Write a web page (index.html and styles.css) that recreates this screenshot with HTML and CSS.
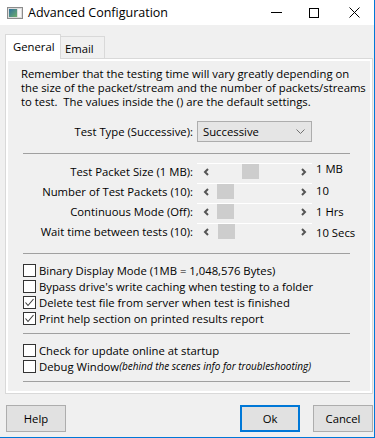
FILE: index.html
```html
<!DOCTYPE html>
<html lang="en">
<head>
    <meta charset="UTF-8">
    <meta name="viewport" content="width=device-width, initial-scale=1.0">
    <title>Advanced Configuration</title>
    <link rel="stylesheet" href="styles.css">
</head>
<body>
<div class="window">
    <div class="titlebar">
        <svg class="app-icon" width="16" height="12" viewBox="0 0 16 12">
            <defs>
                <linearGradient id="ig" x1="0" y1="0" x2="1" y2="1">
                    <stop offset="0" stop-color="#2f6f9e"/>
                    <stop offset="1" stop-color="#6fae6a"/>
                </linearGradient>
            </defs>
            <rect x="0.5" y="0.5" width="15" height="11" fill="#dcdcdc" stroke="#8c8c8c"/>
            <rect x="2" y="2" width="8" height="8" fill="url(#ig)"/>
            <rect x="11" y="2" width="3" height="8" fill="#f8f8f8"/>
        </svg>
        <span class="title">Advanced Configuration</span>
        <div class="controls">
            <span class="ctl ctl-min"><svg width="11" height="1"><rect width="11" height="1" fill="#000"/></svg></span>
            <span class="ctl ctl-max"><svg width="10" height="10"><rect x="0.5" y="0.5" width="9" height="9" fill="none" stroke="#000"/></svg></span>
            <span class="ctl ctl-close"><svg width="11" height="11"><path d="M0.5 0.5L10.5 10.5M10.5 0.5L0.5 10.5" stroke="#000" fill="none"/></svg></span>
        </div>
    </div>

    <div class="tabs">
        <div class="tab active">General</div>
        <div class="tab email">Email</div>
    </div>

    <div class="panel">
        <div class="content">
            <p class="note">Remember that the testing time will vary greatly depending on<br>the size of the packet/stream and the number of packets/streams<br>to test.&nbsp; The values inside the () are the default settings.</p>

            <div class="field type-row">
                <label>Test Type (Successive):</label>
                <div class="combo">
                    <span>Successive</span>
                    <svg class="chev" width="9" height="5" viewBox="0 0 9 5"><path d="M0.5 0.5L4.5 4.5L8.5 0.5" stroke="#707070" fill="none"/></svg>
                </div>
            </div>

            <hr class="sep sep-first">

            <div class="sliders">
                <div class="field slider-row">
                    <label>Test Packet Size (1 MB):</label>
                    <div class="scroll">
                        <span class="arrow"><svg width="6" height="8" viewBox="0 0 6 8"><path d="M5 1L2 4L5 7" stroke="#555" stroke-width="2" fill="none"/></svg></span>
                        <span class="track"><span class="thumb" style="margin-left:28px"></span></span>
                        <span class="arrow"><svg width="6" height="8" viewBox="0 0 6 8"><path d="M1 1L4 4L1 7" stroke="#555" stroke-width="2" fill="none"/></svg></span>
                    </div>
                    <span class="value">1 MB</span>
                </div>
                <div class="field slider-row">
                    <label>Number of Test Packets (10):</label>
                    <div class="scroll">
                        <span class="arrow"><svg width="6" height="8" viewBox="0 0 6 8"><path d="M5 1L2 4L5 7" stroke="#555" stroke-width="2" fill="none"/></svg></span>
                        <span class="track"><span class="thumb" style="margin-left:3px"></span></span>
                        <span class="arrow"><svg width="6" height="8" viewBox="0 0 6 8"><path d="M1 1L4 4L1 7" stroke="#555" stroke-width="2" fill="none"/></svg></span>
                    </div>
                    <span class="value">10</span>
                </div>
                <div class="field slider-row">
                    <label>Continuous Mode (Off):</label>
                    <div class="scroll">
                        <span class="arrow"><svg width="6" height="8" viewBox="0 0 6 8"><path d="M5 1L2 4L5 7" stroke="#555" stroke-width="2" fill="none"/></svg></span>
                        <span class="track"><span class="thumb" style="margin-left:3px"></span></span>
                        <span class="arrow"><svg width="6" height="8" viewBox="0 0 6 8"><path d="M1 1L4 4L1 7" stroke="#555" stroke-width="2" fill="none"/></svg></span>
                    </div>
                    <span class="value">1 Hrs</span>
                </div>
                <div class="field slider-row">
                    <label>Wait time between tests (10):</label>
                    <div class="scroll">
                        <span class="arrow"><svg width="6" height="8" viewBox="0 0 6 8"><path d="M5 1L2 4L5 7" stroke="#555" stroke-width="2" fill="none"/></svg></span>
                        <span class="track"><span class="thumb" style="margin-left:4px"></span></span>
                        <span class="arrow"><svg width="6" height="8" viewBox="0 0 6 8"><path d="M1 1L4 4L1 7" stroke="#555" stroke-width="2" fill="none"/></svg></span>
                    </div>
                    <span class="value">10 Secs</span>
                </div>
            </div>

            <hr class="sep">

            <div class="checks">
                <div class="check"><span class="box"></span>Binary Display Mode (1MB = 1,048,576 Bytes)</div>
                <div class="check"><span class="box"></span>Bypass drive's write caching when testing to a folder</div>
                <div class="check"><span class="box"><svg width="11" height="11" viewBox="0 0 11 11"><path d="M1.5 5.5L4 8.5L9.5 2" stroke="#3a3a3a" stroke-width="1.1" fill="none"/></svg></span>Delete test file from server when test is finished</div>
                <div class="check"><span class="box"><svg width="11" height="11" viewBox="0 0 11 11"><path d="M1.5 5.5L4 8.5L9.5 2" stroke="#3a3a3a" stroke-width="1.1" fill="none"/></svg></span>Print help section on printed results report</div>
            </div>

            <hr class="sep sep-mid">

            <div class="checks">
                <div class="check"><span class="box"></span>Check for update online at startup</div>
                <div class="check"><span class="box"></span>Debug Window<em class="hint">(behind the scenes info for troubleshooting)</em></div>
            </div>

            <hr class="sep sep-mid">
        </div>
    </div>

    <div class="buttons">
        <button class="btn">Help</button>
        <button class="btn btn-ok">Ok</button>
        <button class="btn btn-cancel">Cancel</button>
    </div>
</div>
</body>
</html>
```

FILE: styles.css
```css
body {
    margin: 0;
    background-color: #f0f0f0;
    font-family: "Open Sans", "Noto Sans", sans-serif;
    font-size: 11.3px;
    color: #000;
}
.window {
    width: 374px;
    height: 437px;
    border-right: 1px solid #0078d7;
    border-bottom: 1px solid #0078d7;
    overflow: hidden;
}

/* title bar */
.titlebar {
    height: 25px;
    background-color: #fff;
    display: flex;
    align-items: center;
}
.app-icon {
    margin-left: 7px;
    flex: none;
}
.title {
    margin-left: 5px;
    font-size: 12.5px;
    line-height: 25px;
}
.controls {
    margin-left: auto;
    display: flex;
}
.ctl {
    height: 25px;
    display: flex;
    align-items: center;
    justify-content: center;
}
.ctl-min { width: 36px; }
.ctl-max { width: 40px; }
.ctl-close { width: 40px; }

/* tabs */
.tabs {
    margin-top: 9px;
    padding-left: 5px;
    height: 24px;
    display: flex;
    align-items: flex-end;
}
.tab {
    box-sizing: border-box;
    height: 22px;
    padding-top: 5px;
    line-height: 14px;
    border: 1px solid #d9d9d9;
    border-bottom: 0;
    background-color: #f0f0f0;
}
.tab.active {
    position: relative;
    z-index: 1;
    width: 56px;
    height: 25px;
    margin-bottom: -1px;
    padding-left: 7px;
    background-color: #fff;
}
.tab.email {
    width: 45px;
    margin-left: -1px;
    padding-left: 4px;
}

.panel {
    box-sizing: border-box;
    margin-left: 5px;
    width: 368px;
    height: 336px;
    border: 1px solid #d9d9d9;
    background-color: #fff;
    padding: 2px;
}
.content {
    height: 100%;
    background-color: #f0f0f0;
    overflow: hidden;
}
.note {
    margin: 0;
    padding: 6px 0 0 13px;
    line-height: 14px;
    white-space: nowrap;
}

/* label + control rows */
.field {
    display: grid;
    grid-template-columns: 185px 115px auto;
    column-gap: 4px;
    align-items: center;
}
.field label {
    text-align: right;
    white-space: nowrap;
    line-height: 14px;
}
.type-row {
    margin-top: 12px;
}
.combo {
    box-sizing: border-box;
    height: 21px;
    border: 1px solid #adadad;
    background-color: #e5e5e5;
    display: flex;
    align-items: center;
    padding-left: 5px;
}
.combo .chev {
    margin-left: auto;
    margin-right: 6px;
}

.sep {
    margin: 0 0 0 15px;
    width: 327px;
    height: 0;
    border: 0;
    border-top: 1px solid #a0a0a0;
}
.sep-first { margin-top: 11px; }
.sep-mid { margin-top: 7px; }

.sliders {
    margin-top: 9px;
    margin-bottom: 13px;
    display: grid;
    row-gap: 3px;
}
.slider-row {
    height: 17px;
}
.scroll {
    box-sizing: border-box;
    height: 17px;
    border-top: 1px solid #fff;
    display: flex;
}
.arrow {
    width: 17px;
    display: flex;
    align-items: center;
    justify-content: center;
}
.track {
    flex: 1;
    display: flex;
}
.thumb {
    display: block;
    width: 17px;
    height: 15px;
    background-color: #cdcdcd;
}
.value {
    line-height: 14px;
    white-space: nowrap;
}
.slider-row:nth-child(1) .value { margin-top: -5px; }
.slider-row:nth-child(2) .value { margin-top: -2px; }
.slider-row:nth-child(4) .value { margin-top: 2px; }

/* check boxes */
.checks {
    margin-top: 8px;
    padding-left: 15px;
}
.check {
    height: 16px;
    display: flex;
    align-items: center;
    white-space: nowrap;
}
.box {
    box-sizing: border-box;
    width: 13px;
    height: 13px;
    margin-right: 3px;
    border: 1px solid #333;
    background-color: #fff;
    display: flex;
}
.hint {
    font-size: 10px;
}

/* bottom buttons */
.buttons {
    display: flex;
    padding: 11px 1px 0 6px;
}
.btn {
    box-sizing: border-box;
    width: 60px;
    height: 27px;
    border: 1px solid #adadad;
    background-color: #e1e1e1;
    font-family: inherit;
    font-size: 11.3px;
    color: #000;
    padding: 0;
}
.btn-ok {
    margin-left: auto;
    border: 2px solid #0078d7;
}
.btn-cancel {
    margin-left: 13px;
}
```
